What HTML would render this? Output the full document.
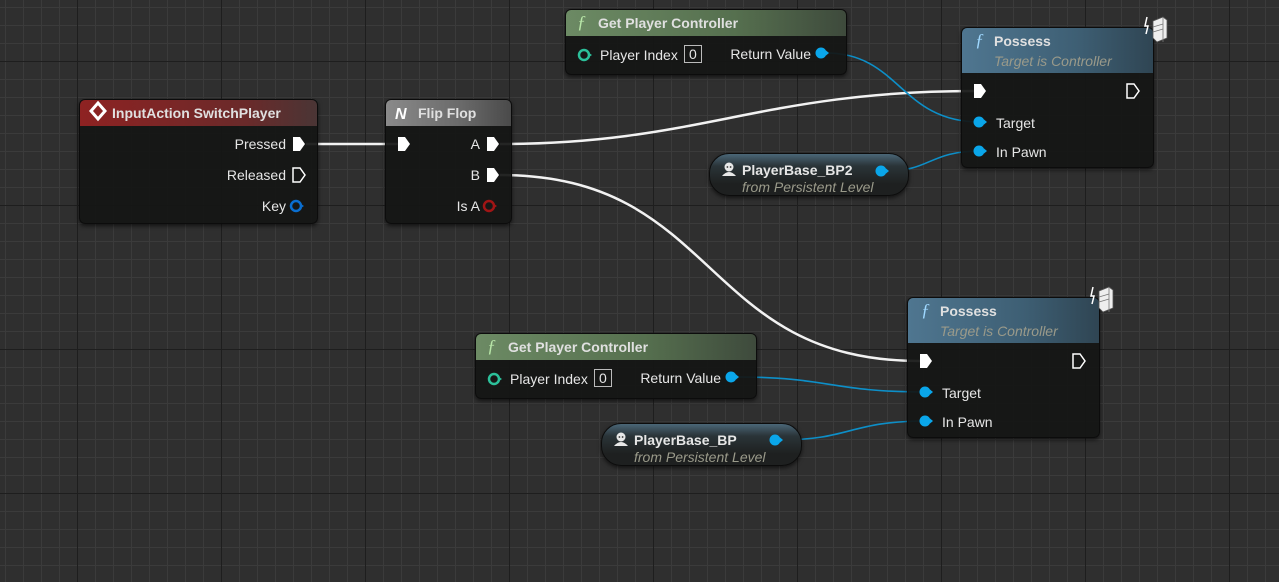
<!DOCTYPE html>
<html><head><meta charset="utf-8"><style>
html,body{margin:0;padding:0}
body{width:1279px;height:582px;overflow:hidden;position:relative;font-family:"Liberation Sans",sans-serif;
background-color:#2f2f2f;
background-image:linear-gradient(90deg,#1e1e1e 1px,transparent 1px),linear-gradient(#1e1e1e 1px,transparent 1px),linear-gradient(90deg,#3b3b3b 1px,transparent 1px),linear-gradient(#3b3b3b 1px,transparent 1px);
background-size:144px 144px,144px 144px,18px 18px,18px 18px;
background-position:77px 0,0 61px,5px 0,0 7px;}
.n{position:absolute;background:rgba(20,21,20,0.93);border:1px solid #0c0c0c;border-radius:6px;box-shadow:0 2px 4px rgba(0,0,0,.6);overflow:hidden}
.h{height:26px;color:#e0e0e0;font-weight:bold;font-size:14px;line-height:26px;padding-left:32px;position:relative}
.t{position:absolute;color:#e6e6e6;font-size:14px;white-space:nowrap}
.s{color:#9a9a8a;font-style:italic;font-weight:normal;font-size:14px}
.pill{position:absolute;border-radius:20px;border:1px solid #0c0c0c;background:linear-gradient(#4a6677 0,#2a3438 12px,#1e2020 30px);box-shadow:0 2px 4px rgba(0,0,0,.6)}
svg{position:absolute;left:0;top:0}
</style></head><body>
<svg width="1279" height="582" fill="none">
<g stroke="#f2f2f2" stroke-width="2.5">
<path d="M306 144 L398 144"/>
<path d="M500 144 C700 144 760 91 975 91"/>
<path d="M500 175 C720 175 700 361 920 361"/>
</g>
<g stroke="#0d8fc8" stroke-width="1.6">
<path d="M826 53 C900 53 900 122 980 122"/>
<path d="M887 171 C930 171 930 151 980 151"/>
<path d="M736 377 C830 377 830 392 926 392"/>
<path d="M780 440 C850 440 850 421 926 421"/>
</g>
</svg>

<div class="n" style="left:79px;top:99px;width:237px;height:123px">
<div class="h" style="background:linear-gradient(90deg,#8e2222,#6a2a2a 70%,#4a3535);padding-left:32px">InputAction SwitchPlayer</div>
<div class="t" style="right:31px;top:36px">Pressed</div>
<div class="t" style="right:31px;top:67px">Released</div>
<div class="t" style="right:31px;top:98px">Key</div>
</div>
<div class="n" style="left:385px;top:99px;width:125px;height:123px">
<div class="h" style="background:linear-gradient(90deg,#8a8a8a,#6a6a6a 60%,#4a4a4a)">Flip Flop</div>
<div class="t" style="right:31px;top:36px">A</div>
<div class="t" style="right:31px;top:67px">B</div>
<div class="t" style="right:31px;top:98px">Is A</div>
</div>
<div class="n" style="left:565px;top:9px;width:280px;height:64px">
<div class="h" style="background:linear-gradient(90deg,#6c8a64,#56704f 60%,#3e4a3c)">Get Player Controller</div>
<div class="t" style="left:34px;top:37px">Player Index</div>
<div class="t" style="left:118px;top:35px;border:1px solid #bbb;padding:0 4px;line-height:16px">0</div>
<div class="t" style="right:35px;top:36px">Return Value</div>
</div>
<div class="n" style="left:961px;top:27px;width:191px;height:139px">
<div class="h" style="height:45px;line-height:20px;padding-top:3px;box-sizing:border-box;background:linear-gradient(90deg,#4f7690,#3e5f74 60%,#2f4553)">Possess<br><span class="s">Target is Controller</span></div>
<div class="t" style="left:34px;top:87px">Target</div>
<div class="t" style="left:34px;top:116px">In Pawn</div>
</div>
<div class="n" style="left:907px;top:297px;width:191px;height:139px">
<div class="h" style="height:45px;line-height:20px;padding-top:3px;box-sizing:border-box;background:linear-gradient(90deg,#4f7690,#3e5f74 60%,#2f4553)">Possess<br><span class="s">Target is Controller</span></div>
<div class="t" style="left:34px;top:87px">Target</div>
<div class="t" style="left:34px;top:116px">In Pawn</div>
</div>
<div class="n" style="left:475px;top:333px;width:280px;height:64px">
<div class="h" style="background:linear-gradient(90deg,#6c8a64,#56704f 60%,#3e4a3c)">Get Player Controller</div>
<div class="t" style="left:34px;top:37px">Player Index</div>
<div class="t" style="left:118px;top:35px;border:1px solid #bbb;padding:0 4px;line-height:16px">0</div>
<div class="t" style="right:35px;top:36px">Return Value</div>
</div>
<div class="pill" style="left:709px;top:153px;width:198px;height:41px">
<div class="t" style="left:32px;top:8px;font-weight:bold">PlayerBase_BP2</div>
<div class="t s" style="left:32px;top:25px">from Persistent Level</div>
</div>
<div class="pill" style="left:601px;top:423px;width:199px;height:41px">
<div class="t" style="left:32px;top:8px;font-weight:bold">PlayerBase_BP</div>
<div class="t s" style="left:32px;top:25px">from Persistent Level</div>
</div>

<svg width="1279" height="582">
<defs>
<path id="ex" d="M-6 -7 L1 -7 L6 0 L1 7 L-6 7 Z"/>
<g id="dp"><circle r="5.5" fill="#0aa6ea"/><path d="M5 -2.5 L8 0 L5 2.5Z" fill="#0aa6ea"/></g>
<g id="pw"><circle cx="0" cy="-3" r="4.5" fill="#e8e8e8"/><path d="M-7 6 Q0 -2 7 6Z" fill="#e8e8e8"/><circle cx="-1.6" cy="-3" r=".9" fill="#333"/><circle cx="1.6" cy="-3" r=".9" fill="#333"/></g>
<g id="srv"><path d="M-2 -8 L8 -12 L12 -9 L12 9 L2 13 L-2 9Z" fill="#eee" stroke="#555" stroke-width=".8"/><path d="M-2 -2 L8 -5 M-2 3 L8 0 M8 -12 L8 13" stroke="#777" stroke-width=".8"/><path d="M-8 -12 L-10 -3 L-7 -3 L-9 5" stroke="#fff" stroke-width="1.5" fill="none"/></g>
</defs>
<path d="M98 103 L105 111 L98 119 L91 111Z" fill="none" stroke="#fff" stroke-width="3"/>
<use href="#ex" x="299" y="144" fill="#fff"/>
<use href="#ex" x="299" y="175" fill="none" stroke="#fff" stroke-width="1.5"/>
<circle cx="296" cy="206" r="5" fill="none" stroke="#0a6ed0" stroke-width="2.5"/><path d="M301 204 L304 206 L301 208Z" fill="#0a6ed0"/>
<text x="395" y="119" font-family="Liberation Sans,sans-serif" font-weight="bold" font-style="italic" font-size="16" fill="#fff">N</text>
<use href="#ex" x="404" y="144" fill="#fff"/>
<use href="#ex" x="493" y="144" fill="#fff"/>
<use href="#ex" x="493" y="175" fill="#fff"/>
<circle cx="489" cy="206" r="5" fill="none" stroke="#a01515" stroke-width="2.5"/><path d="M494 204 L497 206 L494 208Z" fill="#a01515"/>
<g font-family="Liberation Serif,serif" font-style="italic" font-size="18">
<text x="577" y="28" fill="#b8e6a8">ƒ</text><text x="487" y="352" fill="#b8e6a8">ƒ</text>
<text x="975" y="46" fill="#9fd8ff">ƒ</text><text x="921" y="316" fill="#9fd8ff">ƒ</text>
</g>
<circle cx="584" cy="55" r="5" fill="none" stroke="#2cc09a" stroke-width="2.5"/><path d="M589 53 L592 55 L589 57Z" fill="#2cc09a"/>
<circle cx="494" cy="379" r="5" fill="none" stroke="#2cc09a" stroke-width="2.5"/><path d="M499 377 L502 379 L499 381Z" fill="#2cc09a"/>
<use href="#dp" x="821" y="53"/><use href="#dp" x="731" y="377"/>
<use href="#ex" x="980" y="91" fill="#fff"/>
<use href="#ex" x="1133" y="91" fill="none" stroke="#fff" stroke-width="1.5"/>
<use href="#dp" x="979" y="122"/><use href="#dp" x="979" y="151"/>
<use href="#ex" x="926" y="361" fill="#fff"/>
<use href="#ex" x="1079" y="361" fill="none" stroke="#fff" stroke-width="1.5"/>
<use href="#dp" x="925" y="392"/><use href="#dp" x="925" y="421"/>
<use href="#srv" x="1155" y="29"/><use href="#srv" x="1101" y="299"/>
<use href="#pw" x="729" y="170"/><use href="#pw" x="621" y="440"/>
<use href="#dp" x="881" y="171"/><use href="#dp" x="775" y="440"/>
</svg>
</body></html>
